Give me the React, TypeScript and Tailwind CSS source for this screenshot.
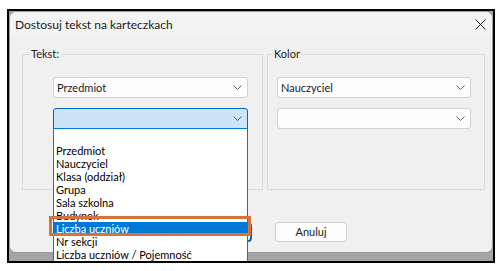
const ITEMS = [
  "",
  "Przedmiot",
  "Nauczyciel",
  "Klasa (oddział)",
  "Grupa",
  "Sala szkolna",
  "Budynek",
  "Liczba uczniów",
  "Nr sekcji",
  "Liczba uczniów / Pojemność",
];

const SELECTED = "Liczba uczniów";

function Chevron() {
  return (
    <svg width="9" height="5" viewBox="0 0 9 5" className="shrink-0">
      <path d="M0.5 0.5 L4.5 4.5 L8.5 0.5" fill="none" stroke="#5f5f5f" strokeWidth="1" />
    </svg>
  );
}

function Combo({ value, width }: { value: string; width: string }) {
  return (
    <div
      className={`flex h-[21px] items-center justify-between rounded-[3px] border border-[#d1d1d1] bg-[#fdfdfd] pl-[3px] pr-[5px] ${width}`}
    >
      <span className="leading-none">{value}</span>
      <Chevron />
    </div>
  );
}

function OpenCombo() {
  return (
    <div className="relative z-10 mt-[10px] w-[195px]">
      <div className="flex h-[21px] items-center justify-end rounded-t-[3px] border border-[#0067c0] bg-[#cce4f7] pr-[5px]">
        <Chevron />
      </div>
      {/* open drop-down list, lies over the buttons */}
      <div className="absolute left-0 top-[20px] h-[134px] w-full border border-[#0078d7] bg-white pt-[2px]">
        {ITEMS.map((item, i) => (
          <div
            key={i}
            className={`h-[13px] pl-[2px] leading-[13px] ${
              item === SELECTED ? "bg-[#0078d7] text-white" : "text-black"
            }`}
          >
            {item}
          </div>
        ))}
      </div>
    </div>
  );
}

export default function App() {
  return (
    <div
      className="relative h-[271px] w-[503px] bg-white text-[11px] text-[#1b1b1b]"
      style={{ fontFamily: 'Lato, "Noto Sans", sans-serif' }}
    >
      <div className="ml-[7px] pt-[9px]">
        <div className="h-[254px] w-[488px] overflow-hidden border-2 border-black bg-[#a4a4a4]">
          <div className="h-[242px] w-[484px] rounded-[7px] border border-[#9c9c9c] bg-[#f0f0f0]">
            {/* title bar */}
            <div className="flex h-[25px] items-center justify-between rounded-t-[7px] bg-[#f3f3f3] pl-[5px] pr-[6px]">
              <span className="text-[12px]">Dostosuj tekst na karteczkach</span>
              <svg width="11" height="11" viewBox="0 0 11 11">
                <path d="M0.5 0.5 L10.5 10.5 M10.5 0.5 L0.5 10.5" stroke="#1b1b1b" strokeWidth="1" />
              </svg>
            </div>

            {/* group boxes */}
            <div className="mt-[9px] flex gap-[4px] pl-[12px]">
              <fieldset className="h-[144px] w-[241px] border border-[#dcdcdc] pl-[30px]">
                <legend className="-ml-[24px] px-[2px] leading-[16px]">Tekst:</legend>
                <div className="mt-[15px]">
                  <Combo value="Przedmiot" width="w-[195px]" />
                </div>
                <OpenCombo />
              </fieldset>
              <fieldset className="h-[144px] w-[218px] border border-[#dcdcdc] pl-[9px]">
                <legend className="-ml-[4px] px-[1px] leading-[16px]">Kolor</legend>
                <div className="mt-[15px]">
                  <Combo value="Nauczyciel" width="w-[194px]" />
                </div>
                <div className="mt-[10px]">
                  <Combo value="" width="w-[194px]" />
                </div>
              </fieldset>
            </div>

            {/* buttons */}
            <div className="mt-[32px] flex gap-[23px] pl-[170px]">
              <button className="h-[20px] w-[72px] rounded-[4px] border-2 border-[#0067c0] bg-[#fdfdfd]">
                OK
              </button>
              <button className="h-[20px] w-[72px] rounded-[4px] border border-[#d0d0d0] bg-[#fdfdfd]">
                Anuluj
              </button>
            </div>
          </div>
        </div>
      </div>

      {/* annotation around the picked item */}
      <div className="absolute left-[49px] top-[216px] z-20 h-[20px] w-[202px] border-[3px] border-[#d9713c]" />
    </div>
  );
}
